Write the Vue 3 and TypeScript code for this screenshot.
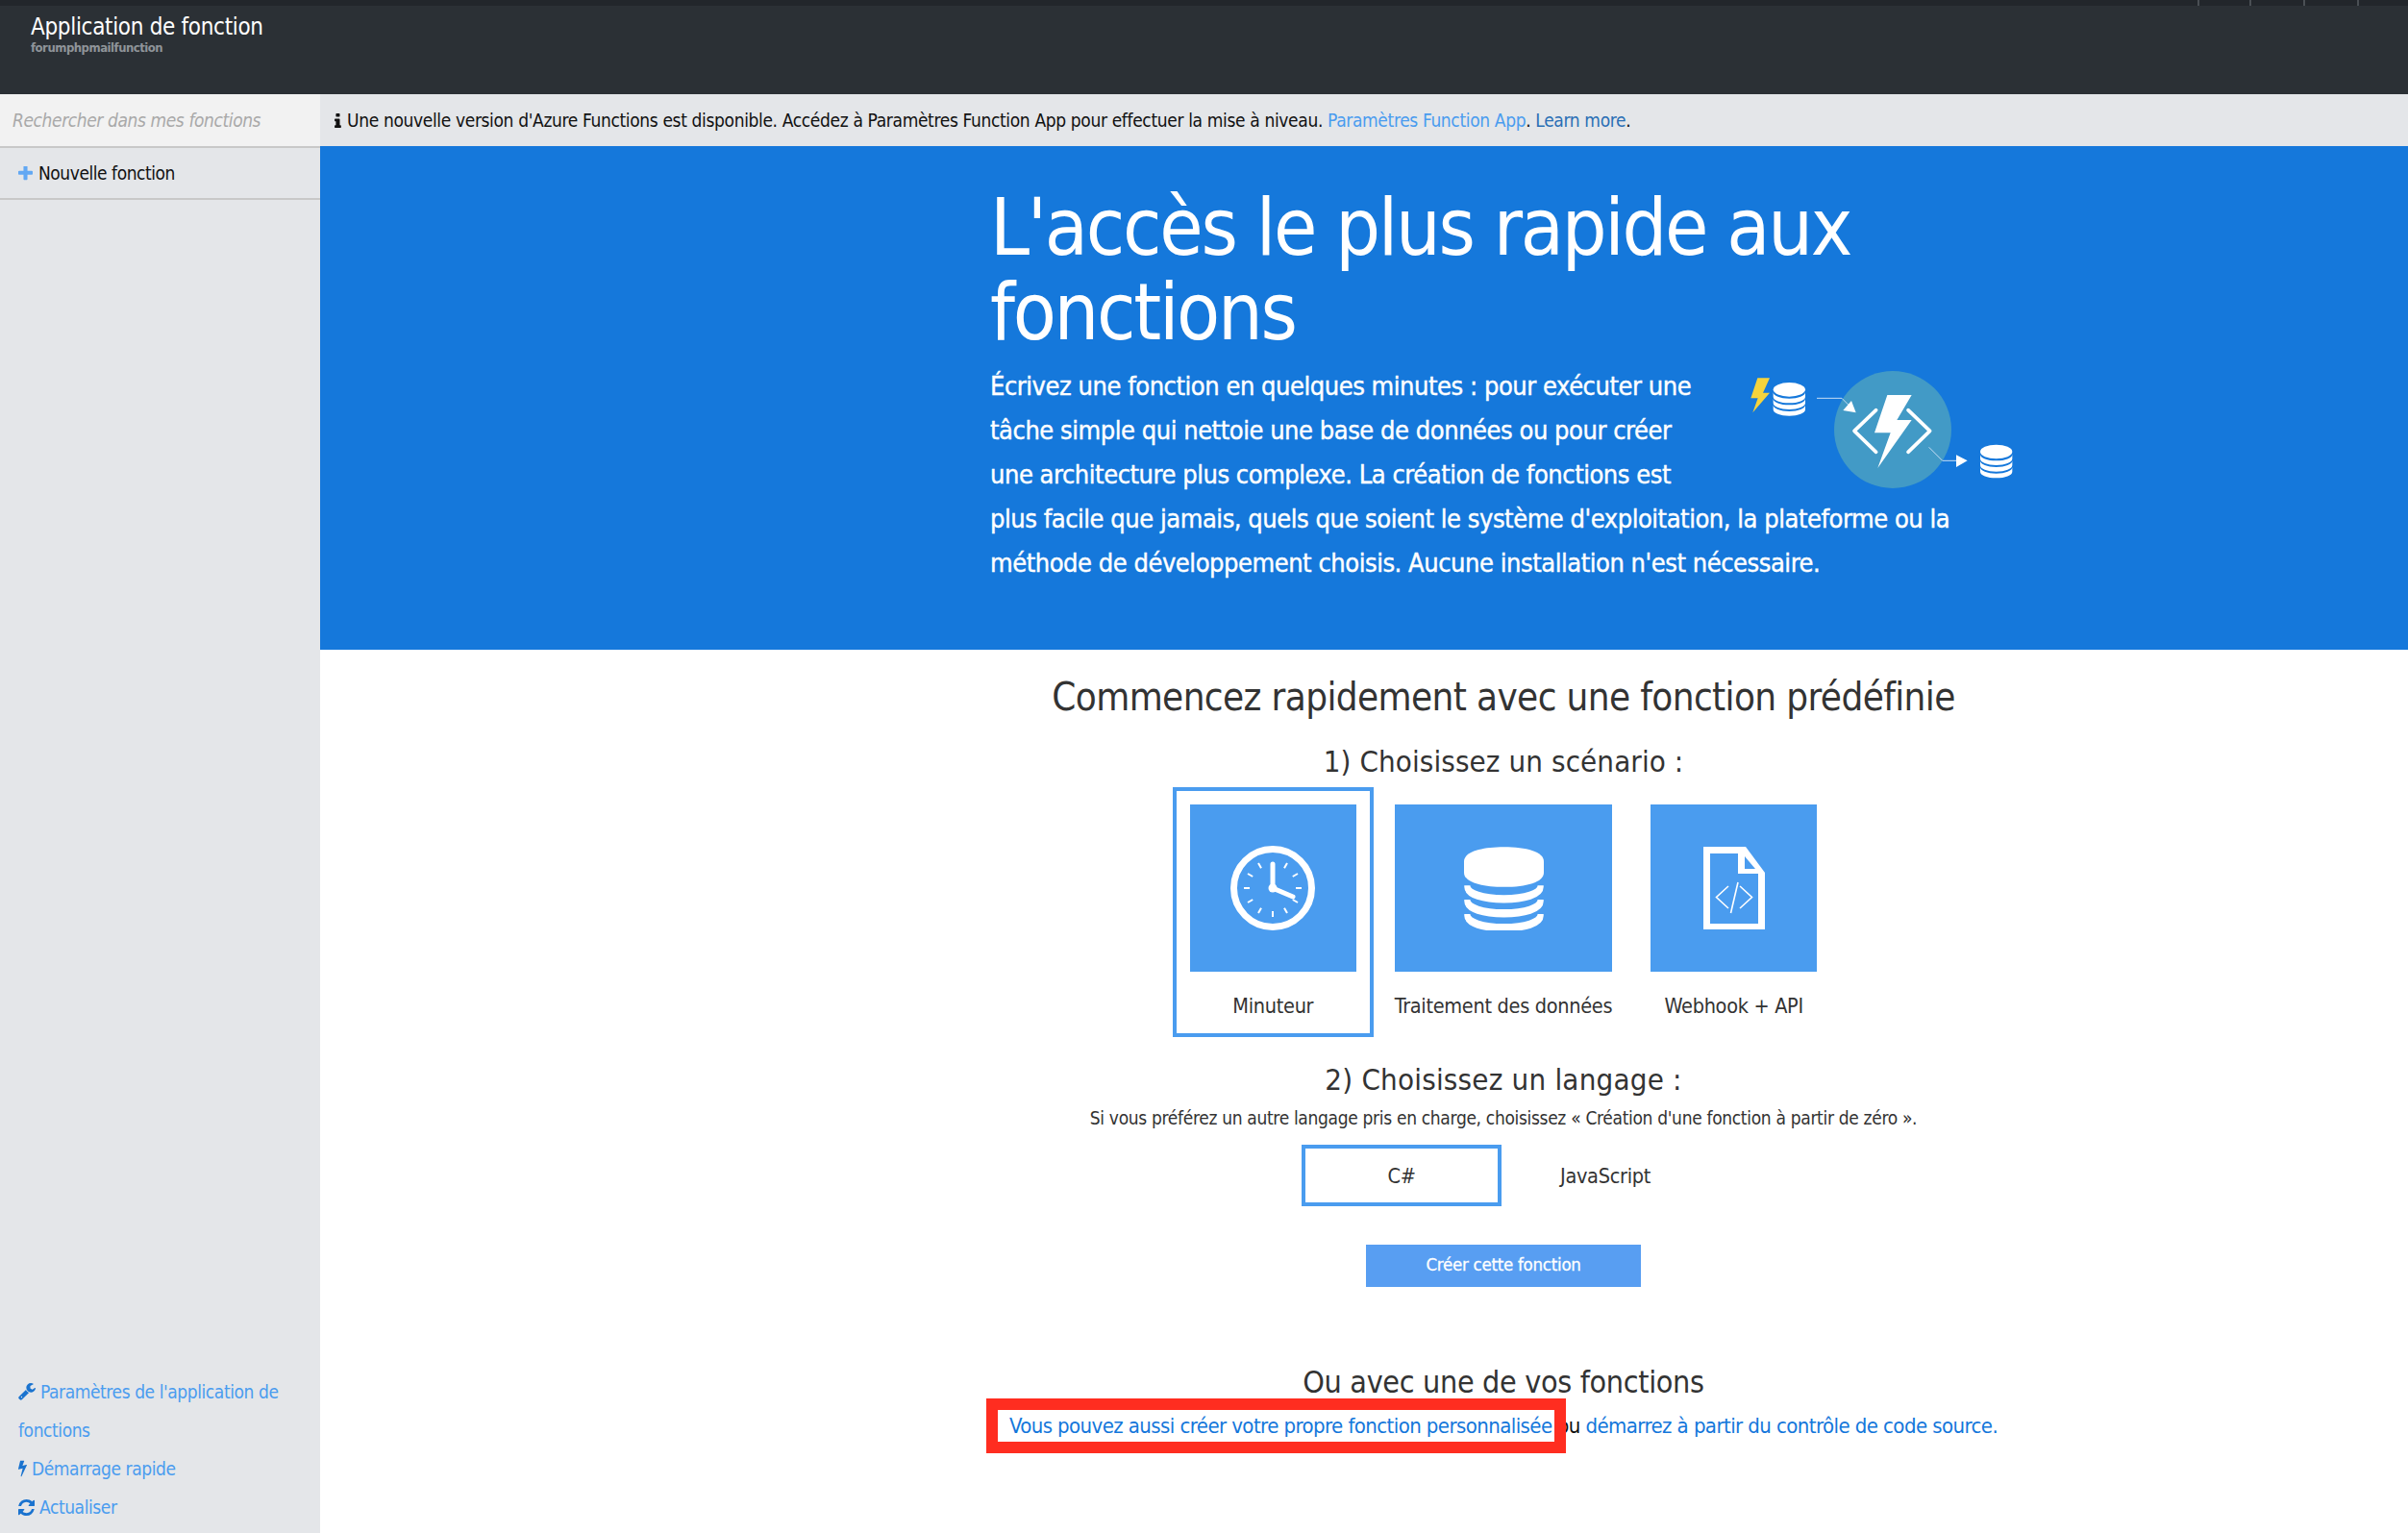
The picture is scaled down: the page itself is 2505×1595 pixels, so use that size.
<script setup lang="ts">
const wrench = 'M448 1472q0-26-19-45t-45-19-45 19-19 45 19 45 45 19 45-19 19-45zm644-420l-682 682q-37 37-90 37-52 0-91-37l-106-108q-38-36-38-90 0-53 38-91l681-681q39 98 114.5 173.5t173.5 114.5zm634-435q0 39-23 106-47 134-164.5 217.5t-258.5 83.5q-185 0-316.5-131.5t-131.5-316.5 131.5-316.5 316.5-131.5q58 0 121.5 16.5t107.5 46.5q16 11 16 28t-16 28l-293 169v224l193 107q5-3 79-48.5t135.5-81 70.5-35.5q15 0 23.5 10t8.5 25z'
const bolt = 'M1333 566q18 20 7 44l-540 1157q-13 25-42 25-4 0-14-2-17-5-25.5-19t-4.5-30l197-808-406 101q-4 1-12 1-18 0-31-11-18-15-13-39l201-825q4-14 16-23t28-9h328q19 0 32 12.5t13 29.5q0 8-5 18l-171 463 396-98q8-2 12-2 19 0 34 15z'
const refresh = 'M1639 1056q0 5-1 7-64 268-268 434.5t-478 166.5q-146 0-282.5-55t-243.5-157l-129 129q-19 19-45 19t-45-19-19-45v-448q0-26 19-45t45-19h448q26 0 45 19t19 45-19 45l-137 137q71 66 161 102t187 36q134 0 250-65t186-179q11-17 53-117 8-23 30-23h192q13 0 22.5 9.5t9.5 22.5zm25-800v448q0 26-19 45t-45 19h-448q-26 0-45-19t-19-45 19-45l138-138q-148-137-349-137-134 0-250 65t-186 179q-11 17-53 117-8 23-30 23h-199q-13 0-22.5-9.5t-9.5-22.5v-7q65-268 270-434.5t480-166.5q146 0 284 55.5t245 156.5l130-129q19-19 45-19t45 19 19 45z'
const plus = 'M1600 736v192q0 40-28 68t-68 28h-416v416q0 40-28 68t-68 28h-192q-40 0-68-28t-28-68v-416h-416q-40 0-68-28t-28-68v-192q0-40 28-68t68-28h416v-416q0-40 28-68t68-28h192q40 0 68 28t28 68v416h416q40 0 68 28t28 68z'
const info = 'M1216 1344v128q0 26-19 45t-45 19h-512q-26 0-45-19t-19-45v-128q0-26 19-45t45-19h64v-384h-64q-26 0-45-19t-19-45v-128q0-26 19-45t45-19h384q26 0 45 19t19 45v576h64q26 0 45 19t19 45zm-128-1152v192q0 26-19 45t-45 19h-256q-26 0-45-19t-19-45v-192q0-26 19-45t45-19h256q26 0 45 19t19 45z'

const band = (y: number) =>
  `M0 ${y}v14c0 12 22 20 50 20s50-8 50-20v-14c0 12-22 20-50 20s-50-8-50-20z`
const dbBands = [30, 50, 70].map(band)
const bigBands = [48, 66, 84].map((y) => `M0 ${y}v2c0 10 22 16 50 16s50-6 50-16v-2c0 10-22 16-50 16s-50-6-50-16z`)

const clockTicks = [30, 60, 90, 120, 150, 180, 210, 240, 270, 300, 330]
</script>

<template>
  <div class="page">
    <header class="topbar">
      <div class="strip">
        <span class="tick t1"></span>
        <span class="tick t2"></span>
        <span class="tick t3"></span>
        <span class="tick t4"></span>
      </div>
      <div class="app-title">Application de fonction</div>
      <div class="app-name">forumphpmailfunction</div>
    </header>

    <div class="body-row">
      <aside class="sidebar">
        <div class="search">Rechercher dans mes fonctions</div>
        <div class="new-fn">
          <svg class="plus" viewBox="192 192 1408 1408"><path :d="plus" /></svg>
          <span>Nouvelle fonction</span>
        </div>
        <nav class="side-links">
          <a><svg class="fa wrench" viewBox="64 128 1664 1664"><path :d="wrench" /></svg> Paramètres de l'application de fonctions</a>
          <a><svg class="fa boltic" viewBox="450 128 900 1664"><path :d="bolt" /></svg> Démarrage rapide</a>
          <a><svg class="fa refresh" viewBox="128 128 1536 1536"><path :d="refresh" /></svg> Actualiser</a>
        </nav>
      </aside>

      <main class="main">
        <div class="notice">
          <svg class="info" viewBox="570 128 660 1408"><path :d="info" /></svg>
          <span>Une nouvelle version d'Azure Functions est disponible. Accédez à Paramètres Function App pour effectuer la mise à niveau. <a class="lnk-light">Paramètres Function App</a>. <a class="lnk-dark">Learn more</a>.</span>
        </div>

        <section class="hero">
          <div class="col">
            <h1>L'accès le plus rapide aux fonctions</h1>
            <p>
              <svg class="hero-art" viewBox="39 54 981 411" width="327" height="137">
                <path class="yellow" d="M205 97H243L222 143H243L190 205L206 160H184Z" />
                <g transform="translate(254 111)">
                  <ellipse cx="50" cy="22" rx="50" ry="22" fill="#fff" />
                  <path v-for="d in dbBands" :key="d" :d="d" fill="#fff" />
                </g>
                <circle cx="627" cy="258" r="183" fill="#429ac6" />
                <path class="wire" d="M390 160H468L490 182" />
                <path class="head" d="M512 205L472 198L498 168Z" />
                <path class="head" d="M610 150H686L640 228H686L580 378L620 268H570Z" />
                <path class="bracket" d="M575 197L507 262L575 328M675 197L743 262L675 328" />
                <path class="wire" d="M740 313L782 355H825" />
                <path class="head" d="M825 337L860 355L825 375Z" />
                <g transform="translate(900 305)">
                  <ellipse cx="50" cy="22" rx="50" ry="22" fill="#fff" />
                  <path v-for="d in dbBands" :key="d" :d="d" fill="#fff" />
                </g>
              </svg>
              Écrivez une fonction en quelques minutes : pour exécuter une tâche simple qui nettoie une base de données ou pour créer une architecture plus complexe. La création de fonctions est plus facile que jamais, quels que soient le système d'exploitation, la plateforme ou la méthode de développement choisis. Aucune installation n'est nécessaire.
            </p>
          </div>
        </section>

        <section class="content">
          <div class="col">
            <h2>Commencez rapidement avec une fonction prédéfinie</h2>
            <h3 class="step1">1) Choisissez un scénario :</h3>
            <div class="tiles">
              <div class="tile selected">
                <div class="tile-img">
                  <svg width="88" height="88" viewBox="0 0 88 88">
                    <circle cx="44" cy="44" r="40.5" fill="none" stroke="#fff" stroke-width="7" />
                    <rect
                      v-for="a in clockTicks"
                      :key="a"
                      x="43"
                      y="14"
                      width="2"
                      height="6"
                      fill="#fff"
                      :transform="`rotate(${a} 44 44)`"
                    />
                    <path d="M44 19V44L65 53" fill="none" stroke="#fff" stroke-width="5" stroke-linecap="round" />
                    <circle cx="44" cy="44" r="4.5" fill="#fff" />
                  </svg>
                </div>
                <div class="tile-label">Minuteur</div>
              </div>
              <div class="tile">
                <div class="tile-img">
                  <svg width="83" height="87" viewBox="0 0 100 104">
                    <path d="M0 18C0 6 22 0 50 0s50 6 50 18v14c0 12-22 18-50 18S0 44 0 32z" fill="#fff" />
                    <path v-for="d in bigBands" :key="d" :d="d" fill="#fff" stroke="#fff" stroke-width="8" transform="translate(4 0) scale(.92 1)" />
                  </svg>
                </div>
                <div class="tile-label">Traitement des données</div>
              </div>
              <div class="tile">
                <div class="tile-img">
                  <svg width="64" height="86" viewBox="0 0 64 86">
                    <path d="M0 0H44L64 27V86H0Z" fill="#fff" />
                    <path d="M7 7H36V28H57V80H7Z" fill="#4a9cef" />
                    <path d="M43 10L54 23H43Z" fill="#4a9cef" />
                    <path d="M26 41L13.5 52.5L26 64M38 41L50.5 52.5L38 64M36 37L28.5 69" fill="none" stroke="#fff" stroke-width="1.6" />
                  </svg>
                </div>
                <div class="tile-label">Webhook + API</div>
              </div>
            </div>

            <h3 class="step2">2) Choisissez un langage :</h3>
            <div class="sub">Si vous préférez un autre langage pris en charge, choisissez « Création d'une fonction à partir de zéro ».</div>
            <div class="langs">
              <div class="lang selected">C#</div>
              <div class="lang">JavaScript</div>
            </div>
            <button class="create" type="button">Créer cette fonction</button>

            <h3 class="other">Ou avec une de vos fonctions</h3>
            <div class="links">
              <span class="marked"><a>Vous pouvez aussi créer votre propre fonction personnalisée</a><span class="redbox"></span></span> ou <a>démarrez à partir du contrôle de code source.</a>
            </div>
          </div>
        </section>
      </main>
    </div>
  </div>
</template>

<style>
html,
body {
  margin: 0;
  background: #fff;
}
</style>

<style scoped>
.page {
  height: 1595px;
  overflow: hidden;
  display: flex;
  flex-direction: column;
  font-family: "DejaVu Sans", "Liberation Sans", sans-serif;
  font-stretch: condensed;
  color: #333;
}

.topbar {
  height: 98px;
  flex-shrink: 0;
  background: #2b3035;
  color: #fff;
}

.strip {
  height: 6px;
  background: #22262b;
  display: flex;
  justify-content: flex-end;
  margin-bottom: 8px;
}

.tick {
  border-left: 2px solid #4a4f54;
}
.t1 { width: 52px; }
.t2 { width: 54px; }
.t3 { width: 54px; }
.t4 { width: 51px; }

.app-title {
  margin-left: 32px;
  font-size: 24px;
  letter-spacing: -0.32px;
  line-height: 28px;
}

.app-name {
  margin-left: 32px;
  font-size: 13px;
  letter-spacing: -0.5px;
  line-height: 16px;
  font-weight: 700;
  color: #8f9499;
}

.body-row {
  flex: 1;
  display: flex;
  min-height: 0;
}

.sidebar {
  width: 333px;
  flex-shrink: 0;
  background: #e4e6e9;
  display: flex;
  flex-direction: column;
}

.search {
  height: 54px;
  line-height: 54px;
  padding-left: 13px;
  background: #f2f2f2;
  border-bottom: 2px solid #c8c8c8;
  font-size: 19px;
  letter-spacing: -0.4px;
  font-style: italic;
  color: #a9a9a9;
}

.new-fn {
  height: 52px;
  display: flex;
  align-items: center;
  gap: 6px;
  padding-left: 19px;
  border-bottom: 2px solid #c8c8c8;
  font-size: 19px;
  letter-spacing: -0.45px;
  color: #111;
}

.plus {
  width: 15px;
  height: 15px;
  fill: #62a8f3;
}

.side-links {
  margin-top: auto;
  padding: 0 19px 7px;
  font-size: 19px;
  letter-spacing: -0.42px;
  line-height: 40px;
  color: #4a9cef;
}

.side-links a {
  display: block;
}

.fa {
  fill: #1a73cf;
  vertical-align: -2px;
}
.wrench { width: 18px; height: 18px; }
.boltic { width: 9px; height: 18px; }
.refresh { width: 17px; height: 17px; }

.main {
  flex: 1;
  min-width: 0;
  display: flex;
  flex-direction: column;
}

.notice {
  height: 54px;
  flex-shrink: 0;
  background: #e4e6e9;
  display: flex;
  align-items: center;
  gap: 6px;
  padding-left: 15px;
  font-size: 19px;
  letter-spacing: -0.35px;
  color: #111;
}

.info {
  width: 7px;
  height: 15px;
  fill: #111;
}

.lnk-light { color: #4a9cef; }
.lnk-dark { color: #2a6fb5; }

.col {
  width: 1070px;
  margin-left: 697px;
}

.content .col {
  margin-left: 696px;
}

.hero {
  background: #1578db;
  color: #fff;
  padding: 41px 0 67px;
}

.hero h1 {
  margin: 0 0 10px;
  font-size: 82px;
  letter-spacing: -2.28px;
  line-height: 88px;
  font-weight: 400;
}

.hero p {
  margin: 0;
  font-size: 27px;
  letter-spacing: -0.46px;
  line-height: 46px;
  -webkit-text-stroke: 0.4px #fff;
}

.hero-art {
  float: right;
}

.yellow { fill: #f5d33c; }
.head { fill: #fff; }
.wire {
  fill: none;
  stroke: #c7def5;
  stroke-width: 3;
}
.bracket {
  fill: none;
  stroke: #fff;
  stroke-width: 11;
  stroke-linecap: round;
  stroke-linejoin: round;
}

.content {
  padding-top: 24px;
  text-align: center;
}

h2 {
  margin: 0;
  font-size: 40px;
  letter-spacing: -0.62px;
  line-height: 50px;
  font-weight: 400;
}

h3 {
  margin: 0;
  font-weight: 400;
}

.step1 {
  margin-top: 22px;
  font-size: 31px;
  letter-spacing: 0.1px;
  line-height: 40px;
}

.tiles {
  margin-top: 7px;
  display: flex;
  justify-content: center;
  gap: 4px;
}

.tile {
  border: 4px solid transparent;
  padding: 14px 14px 8px;
}

.tile.selected,
.lang.selected {
  border-color: #4a9cef;
}

.tile-img {
  min-width: 173px;
  height: 174px;
  background: #4a9cef;
  display: flex;
  align-items: center;
  justify-content: center;
}

.tile-label {
  margin-top: 16px;
  font-size: 21.5px;
  letter-spacing: -0.3px;
  line-height: 40px;
  white-space: nowrap;
}

.step2 {
  margin-top: 24px;
  font-size: 31px;
  letter-spacing: 0.2px;
  line-height: 40px;
}

.sub {
  margin-top: 7px;
  font-size: 19px;
  letter-spacing: -0.32px;
  line-height: 26px;
}

.langs {
  margin-top: 15px;
  display: flex;
  justify-content: center;
  gap: 4px;
}

.lang {
  box-sizing: border-box;
  width: 208px;
  height: 64px;
  line-height: 58px;
  border: 4px solid transparent;
  font-size: 21.5px;
  letter-spacing: -0.3px;
}

.create {
  display: block;
  margin: 40px auto 0;
  width: 286px;
  height: 44px;
  border: none;
  padding: 0 0 3px;
  background: #589ef2;
  color: #fff;
  font-family: inherit;
  font-stretch: condensed;
  font-size: 18.5px;
  letter-spacing: -0.25px;
  -webkit-text-stroke: 0.3px #fff;
}

.other {
  margin-top: 77px;
  font-size: 32px;
  letter-spacing: -0.33px;
  line-height: 44px;
}

.links {
  margin-top: 9px;
  font-size: 22px;
  letter-spacing: -0.58px;
  line-height: 30px;
  color: #111;
  white-space: nowrap;
}

.links a {
  color: #1477db;
}

.marked {
  position: relative;
}

.redbox {
  position: absolute;
  left: -24px;
  right: -14px;
  top: -16px;
  bottom: -16px;
  border: 12px solid #ff2d20;
}
</style>
